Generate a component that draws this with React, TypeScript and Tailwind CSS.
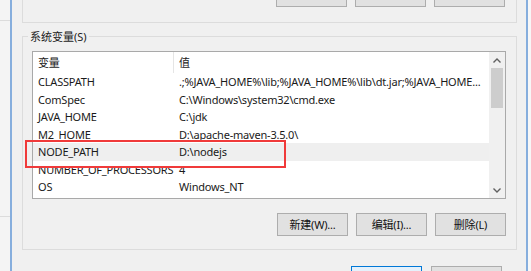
import React from "react";

const rows: [string, string][] = [
  ["CLASSPATH", ".;%JAVA_HOME%\\lib;%JAVA_HOME%\\lib\\dt.jar;%JAVA_HOME..."],
  ["ComSpec", "C:\\Windows\\system32\\cmd.exe"],
  ["JAVA_HOME", "C:\\jdk"],
  ["M2_HOME", "D:\\apache-maven-3.5.0\\"],
  ["NODE_PATH", "D:\\nodejs"],
  ["NUMBER_OF_PROCESSORS", "4"],
  ["OS", "Windows_NT"],
];

function Btn({ label }: { label: string }) {
  return (
    <div className="w-[71px] h-[23px] shrink-0 border border-[#adadad] bg-[#e1e1e1] flex items-center justify-center text-[#111]">
      {label}
    </div>
  );
}

export default function App() {
  return (
    <div
      className="relative w-[531px] h-[271px] overflow-hidden flex bg-[#f0f0f0] text-[11px] leading-none tracking-[-0.2px] text-[#1a1a1a]"
      style={{ fontFamily: "'Noto Sans','Noto Sans CJK SC',sans-serif" }}
    >
      {/* background window strip */}
      <div className="w-[10px] shrink-0 flex flex-col bg-[#f4f4f4]">
        <div className="h-[20px] shrink-0" />
        <div className="h-px shrink-0 bg-[#dcdcdc]" />
        <div className="h-[195px] shrink-0" />
        <div className="h-px shrink-0 bg-[#dcdcdc]" />
      </div>
      <div className="w-[2px] shrink-0 bg-[#86aedd]" />

      {/* dialog body */}
      <div className="flex-1 flex flex-col pl-[10px] pr-[9px]">
        {/* upper group box (cut off) */}
        <div className="h-[23px] shrink-0 border-x border-b border-[#dcdcdc] flex justify-end gap-[8px] pr-[11px]">
          <div className="w-[71px] h-[7px] border-x border-b border-[#adadad] bg-[#e1e1e1]" />
          <div className="w-[71px] h-[7px] border-x border-b border-[#adadad] bg-[#e1e1e1]" />
          <div className="w-[71px] h-[7px] border-x border-b border-[#adadad] bg-[#e1e1e1]" />
        </div>

        {/* system variables group box */}
        <div className="relative shrink-0 mt-[13px] border border-[#dcdcdc] pt-[14px] pl-[9px] pr-[10px] pb-[13px] flex flex-col">
          <div className="absolute -top-[7px] left-[5px] px-[2px] bg-[#f0f0f0] text-[#222] leading-[13px] tracking-normal">
            系统变量(S)
          </div>

          {/* list view */}
          <div className="h-[148px] shrink-0 border border-[#a9a9a9] bg-white flex">
            <div className="flex-1 flex flex-col">
              <div className="h-[21px] shrink-0 flex items-center">
                <div className="w-[141px] h-full pl-[5px] flex items-center border-r border-[#e5e5e5]">变量</div>
                <div className="pl-[5px]">值</div>
              </div>
              {rows.map(([k, v], i) => (
                <div
                  key={k}
                  className={`h-[17.5px] shrink-0 flex items-center whitespace-nowrap ${i === 4 ? "bg-[#efefef]" : ""}`}
                >
                  <div className="w-[141px] shrink-0 pl-[5px]">{k}</div>
                  <div className="pl-[5px]">{v}</div>
                </div>
              ))}
            </div>
            {/* scrollbar */}
            <div className="w-[16px] shrink-0 bg-[#f0f0f0] flex flex-col">
              <div className="h-[16px] shrink-0 flex items-center justify-center">
                <svg width="8" height="5" viewBox="0 0 8 5">
                  <polyline points="0.5,4.5 4,1 7.5,4.5" fill="none" stroke="#606060" strokeWidth="1.4" />
                </svg>
              </div>
              <div className="h-[40px] shrink-0 mx-[2px] bg-[#cdcdcd]" />
              <div className="flex-1" />
              <div className="h-[16px] shrink-0 flex items-center justify-center">
                <svg width="8" height="5" viewBox="0 0 8 5">
                  <polyline points="0.5,0.5 4,4 7.5,0.5" fill="none" stroke="#606060" strokeWidth="1.4" />
                </svg>
              </div>
            </div>
          </div>

          <div className="mt-[14px] shrink-0 flex justify-end gap-[8px]">
            <Btn label="新建(W)..." />
            <Btn label="编辑(I)..." />
            <Btn label="删除(L)" />
          </div>
        </div>

        {/* OK / Cancel */}
        <div className="mt-[16px] shrink-0 flex justify-end gap-[9px] pr-[15px]">
          <div className="w-[71px] h-[23px] shrink-0 border border-[#0078d7] bg-[#e5f1fb]" />
          <div className="w-[71px] h-[23px] shrink-0 border border-[#adadad] bg-[#e1e1e1]" />
        </div>
      </div>

      <div className="w-[2px] shrink-0 bg-[#86aedd]" />
      <div className="w-[3px] shrink-0 bg-[#f7f7f7]" />

      {/* red highlight annotation */}
      <div className="absolute left-[25px] top-[140px] w-[261px] h-[28px] border-2 border-[#f03a3a]" />
    </div>
  );
}
